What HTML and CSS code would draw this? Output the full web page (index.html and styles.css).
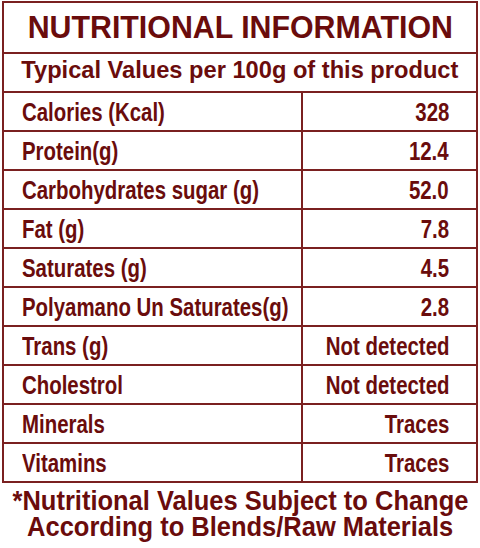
FILE: index.html
```html
<!DOCTYPE html>
<html>
<head>
<meta charset="utf-8">
<link rel="stylesheet" href="styles.css">
</head>
<body>
<div class="panel">
  <div class="title"><span>NUTRITIONAL INFORMATION</span></div>
  <div class="sub"><span>Typical Values per 100g of this product</span></div>
  <div class="row"><div class="lbl"><span>Calories (Kcal)</span></div><div class="val"><span>328</span></div></div>
  <div class="row"><div class="lbl"><span>Protein(g)</span></div><div class="val"><span>12.4</span></div></div>
  <div class="row"><div class="lbl"><span>Carbohydrates sugar (g)</span></div><div class="val"><span>52.0</span></div></div>
  <div class="row"><div class="lbl"><span>Fat (g)</span></div><div class="val"><span>7.8</span></div></div>
  <div class="row"><div class="lbl"><span>Saturates (g)</span></div><div class="val"><span>4.5</span></div></div>
  <div class="row"><div class="lbl"><span>Polyamano Un Saturates(g)</span></div><div class="val"><span>2.8</span></div></div>
  <div class="row"><div class="lbl"><span>Trans (g)</span></div><div class="val"><span>Not detected</span></div></div>
  <div class="row"><div class="lbl"><span>Cholestrol</span></div><div class="val"><span>Not detected</span></div></div>
  <div class="row"><div class="lbl"><span>Minerals</span></div><div class="val"><span>Traces</span></div></div>
  <div class="row last"><div class="lbl"><span>Vitamins</span></div><div class="val"><span>Traces</span></div></div>
</div>
<div class="note">
  <div class="line"><span>*Nutritional Values Subject to Change</span></div>
  <div class="line"><span>According to Blends/Raw Materials</span></div>
</div>
</body>
</html>
```
FILE: styles.css
```css
html, body {
  margin: 0;
  padding: 0;
  background: #fff;
}
body {
  width: 480px;
  height: 548px;
  overflow: hidden;
  color: #6a0c0c;
  font-family: "Liberation Sans", Arial, sans-serif;
  font-weight: bold;
}
.panel {
  margin: 1px 0 0 2px;
  width: 472px;
  border: 2px solid #7a2020;
}
.panel span {
  display: inline-block;
  white-space: nowrap;
  flex: none;
}
.title {
  height: 51px;
  box-sizing: border-box;
  border-bottom: 2px solid #7a2020;
  display: flex;
  align-items: center;
  justify-content: center;
  font-size: 32px;
  line-height: 32px;
  padding-bottom: 2px;
}
.title span {
  transform: scaleX(0.948);
  transform-origin: center;
}
.sub {
  height: 39px;
  box-sizing: border-box;
  border-bottom: 2px solid #7a2020;
  display: flex;
  align-items: center;
  justify-content: center;
  font-size: 24px;
  line-height: 24px;
  padding-bottom: 6px;
}
.sub span {
  transform: scaleX(0.985);
  transform-origin: center;
}
.row {
  display: grid;
  grid-template-columns: 299px minmax(0, 1fr);
  height: 39px;
  box-sizing: border-box;
  border-bottom: 2px solid #7a2020;
  font-size: 26px;
  line-height: 26px;
}
.row.last {
  border-bottom: none;
  height: 37px;
}
.lbl {
  display: flex;
  align-items: center;
  padding-left: 18px;
  border-right: 2px solid #7a2020;
  min-width: 0;
}
.lbl span {
  transform: scaleX(0.785);
  transform-origin: left center;
}
.val {
  display: flex;
  align-items: center;
  justify-content: flex-end;
  padding-right: 27px;
  min-width: 0;
}
.val span {
  transform: scaleX(0.785);
  transform-origin: right center;
}
.note {
  margin-top: 5px;
  font-size: 28px;
}
.note .line {
  display: flex;
  justify-content: center;
  height: 26px;
  line-height: 26px;
}
.note .line span {
  flex: none;
  white-space: nowrap;
  transform: scaleX(0.91);
  transform-origin: center;
}
```
